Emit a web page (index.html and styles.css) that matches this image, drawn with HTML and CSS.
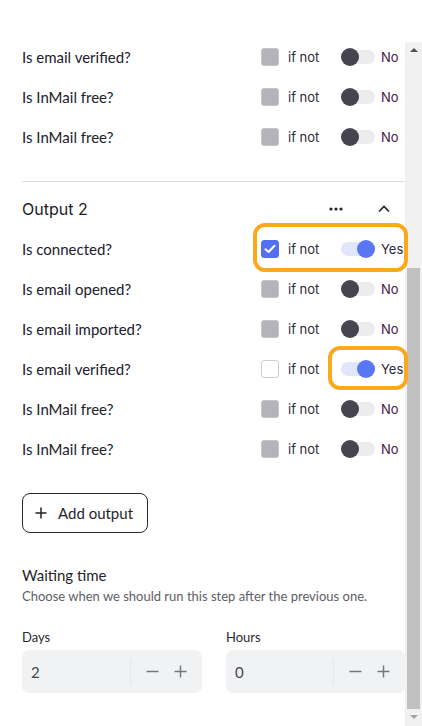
FILE: index.html
```html
<!DOCTYPE html>
<html>
<head>
<meta charset="utf-8">
<link rel="stylesheet" href="styles.css">
</head>
<body>
<div class="page">
  <main class="content">
    <section class="group">
      <div class="row">
        <span class="label">Is email verified?</span>
        <span class="cond"><span class="box"></span><span class="ifnot">if not</span></span>
        <span class="sw"><span class="track"><span class="knob"></span></span><span class="val no">No</span></span>
      </div>
      <div class="row">
        <span class="label">Is InMail free?</span>
        <span class="cond"><span class="box"></span><span class="ifnot">if not</span></span>
        <span class="sw"><span class="track"><span class="knob"></span></span><span class="val no">No</span></span>
      </div>
      <div class="row">
        <span class="label">Is InMail free?</span>
        <span class="cond"><span class="box"></span><span class="ifnot">if not</span></span>
        <span class="sw"><span class="track"><span class="knob"></span></span><span class="val no">No</span></span>
      </div>
    </section>

    <hr class="divider">

    <section class="group">
      <div class="out-head">
        <span class="out-title">Output 2</span>
        <span class="out-actions">
          <svg class="dots" width="14" height="4" viewBox="0 0 14 4"><circle cx="2" cy="2" r="1.6"/><circle cx="7" cy="2" r="1.6"/><circle cx="12" cy="2" r="1.6"/></svg>
          <svg class="chev" width="12" height="8" viewBox="0 0 12 8"><path d="M1 6.5 L6 1.5 L11 6.5" fill="none" stroke="#222" stroke-width="1.6"/></svg>
        </span>
      </div>
      <div class="row">
        <span class="label">Is connected?</span>
        <span class="cond"><span class="box checked"><svg width="12" height="10" viewBox="0 0 12 10"><path d="M1.5 5.2 L4.6 8 L10.5 1.8" fill="none" stroke="#fff" stroke-width="2" stroke-linecap="round" stroke-linejoin="round"/></svg></span><span class="ifnot alt">if not</span></span>
        <span class="sw"><span class="track on"><span class="knob"></span></span><span class="val yes">Yes</span></span>
        <span class="mark mark-a"></span>
      </div>
      <div class="row">
        <span class="label">Is email opened?</span>
        <span class="cond"><span class="box"></span><span class="ifnot">if not</span></span>
        <span class="sw"><span class="track"><span class="knob"></span></span><span class="val no">No</span></span>
      </div>
      <div class="row">
        <span class="label">Is email imported?</span>
        <span class="cond"><span class="box"></span><span class="ifnot">if not</span></span>
        <span class="sw"><span class="track"><span class="knob"></span></span><span class="val no">No</span></span>
      </div>
      <div class="row">
        <span class="label">Is email verified?</span>
        <span class="cond"><span class="box empty"></span><span class="ifnot">if not</span></span>
        <span class="sw"><span class="track on"><span class="knob"></span></span><span class="val yes">Yes</span></span>
        <span class="mark mark-b"></span>
      </div>
      <div class="row">
        <span class="label">Is InMail free?</span>
        <span class="cond"><span class="box"></span><span class="ifnot">if not</span></span>
        <span class="sw"><span class="track"><span class="knob"></span></span><span class="val no">No</span></span>
      </div>
      <div class="row">
        <span class="label">Is InMail free?</span>
        <span class="cond"><span class="box"></span><span class="ifnot">if not</span></span>
        <span class="sw"><span class="track"><span class="knob"></span></span><span class="val no">No</span></span>
      </div>
    </section>

    <button class="add-btn" type="button">
      <svg width="12" height="12" viewBox="0 0 12 12"><path d="M6 0.5 V11.5 M0.5 6 H11.5" stroke="#222" stroke-width="1.5"/></svg>
      <span>Add output</span>
    </button>

    <section class="wait">
      <h3 class="wait-title">Waiting time</h3>
      <p class="wait-desc">Choose when we should run this step after the previous one.</p>
      <div class="fields">
        <div class="field">
          <span class="field-label">Days</span>
          <div class="stepper">
            <span class="step-val">2</span>
            <span class="step-btns">
              <svg width="13" height="13" viewBox="0 0 13 13"><path d="M0.5 6.5 H12.5" stroke="#777" stroke-width="1.5"/></svg>
              <svg width="13" height="13" viewBox="0 0 13 13"><path d="M6.5 0.5 V12.5 M0.5 6.5 H12.5" stroke="#777" stroke-width="1.5"/></svg>
            </span>
          </div>
        </div>
        <div class="field">
          <span class="field-label">Hours</span>
          <div class="stepper">
            <span class="step-val">0</span>
            <span class="step-btns">
              <svg width="13" height="13" viewBox="0 0 13 13"><path d="M0.5 6.5 H12.5" stroke="#777" stroke-width="1.5"/></svg>
              <svg width="13" height="13" viewBox="0 0 13 13"><path d="M6.5 0.5 V12.5 M0.5 6.5 H12.5" stroke="#777" stroke-width="1.5"/></svg>
            </span>
          </div>
        </div>
      </div>
    </section>
  </main>

  <aside class="scrollbar">
    <span class="arrow up"></span>
    <span class="sb-track"><span class="thumb"></span></span>
    <span class="arrow down"></span>
  </aside>
</div>
</body>
</html>
```

FILE: styles.css
```css
* { box-sizing: border-box; }
html, body { margin: 0; padding: 0; background: #fff; }
body {
  width: 422px;
  height: 726px;
  overflow: hidden;
  font-family: Lato, "Noto Sans", sans-serif;
  color: #1f1f2b;
}
.page {
  display: flex;
  height: 726px;
}
.content {
  flex: 1;
  padding: 37px 0 0 22px;
  min-width: 0;
}
.group { display: flex; flex-direction: column; }
.row {
  position: relative;
  display: grid;
  grid-template-columns: 1fr 80px 64px;
  align-items: center;
  height: 40px;
}
.label { font-size: 15px; color: #20202c; }
.cond { display: flex; align-items: center; }
.box {
  width: 18px; height: 18px;
  border-radius: 3px;
  background: #b3b3b9;
  border: 1px solid #c4c4c9;
  display: flex; align-items: center; justify-content: center;
}
.box.checked { background: #5370f2; border-color: #5370f2; }
.box.empty { background: #fff; border-color: #cfcfd4; }
.ifnot {
  margin-left: 9px;
  font-family: Inter, "Noto Sans", sans-serif;
  font-size: 13px;
  color: #2a2a3e;
}
.sw { display: flex; align-items: center; }
.track {
  position: relative;
  width: 34px; height: 14px;
  border-radius: 7px;
  background: #ececee;
  display: flex; align-items: center;
}
.knob {
  width: 18px; height: 18px;
  border-radius: 50%;
  background: #45454f;
}
.track.on { background: #e1e6fd; justify-content: flex-end; }
.track.on .knob { background: #5876f6; }
.val {
  margin-left: 6px;
  font-family: Inter, "Noto Sans", sans-serif;
  font-size: 13px;
}
.val.no { color: #4a1446; }
.val.yes { color: #2a2a36; margin-left: 6px; }

.mark {
  position: absolute;
  border: 4px solid #fba81c;
  border-radius: 12px;
  pointer-events: none;
}
.mark-a { left: 231px; right: -3px; top: -6px; bottom: -3px; }
.mark-b { left: 306px; right: -3px; top: -3px; bottom: -1px; }

.divider {
  border: 0;
  border-top: 1px solid #dedede;
  margin: 24px 0 7px 0;
}
.out-head {
  display: flex;
  align-items: center;
  justify-content: space-between;
  height: 40px;
}
.out-title {
  font-family: Inter, "Noto Sans", sans-serif;
  font-size: 16px;
  color: #1a1a26;
}
.out-actions { display: flex; align-items: center; gap: 35px; padding-right: 15px; }
.dots { fill: #222; }

.add-btn {
  margin-top: 24px;
  height: 40px;
  width: 126px;
  display: flex;
  align-items: center;
  gap: 11px;
  padding: 0 0 0 12px;
  background: #fff;
  border: 1px solid #2a2a2a;
  border-radius: 8px;
  font-family: Lato, "Noto Sans", sans-serif;
  font-size: 15px;
  color: #1f1f2b;
}

.wait { margin-top: 32px; }
.wait-title {
  margin: 0;
  font-weight: normal;
  font-size: 15px;
  line-height: 20px;
  color: #1f1f2b;
}
.wait-desc {
  margin: 3px 0 0 0;
  font-size: 13px;
  line-height: 16px;
  color: #5e5e66;
}
.fields {
  display: grid;
  grid-template-columns: 180px 179px;
  gap: 24px;
  margin-top: 25px;
}
.field { display: flex; flex-direction: column; }
.field-label { font-size: 13px; line-height: 16px; color: #2a2a36; }
.stepper {
  margin-top: 5px;
  height: 43px;
  background: #f1f2f4;
  border-radius: 7px;
  display: flex;
  align-items: center;
}
.step-val {
  flex: 1;
  padding-left: 9px;
  font-size: 15px;
  color: #444450;
  border-right: 1px solid #e6e7ea;
  height: 26px;
  line-height: 26px;
}
.step-btns {
  display: flex;
  align-items: center;
  gap: 15px;
  padding: 0 15px 0 15px;
}

.scrollbar {
  width: 17px;
  margin-top: 42px;
  height: 684px;
  background: #f1f1f1;
  display: flex;
  flex-direction: column;
  align-items: center;
}
.arrow {
  width: 0; height: 0;
  border-left: 4px solid transparent;
  border-right: 4px solid transparent;
}
.arrow.up { border-bottom: 4px solid #505050; margin-top: 6px; }
.arrow.down { border-top: 4px solid #a3a3a3; margin-bottom: 7px; }
.sb-track {
  flex: 1;
  width: 100%;
  display: flex;
  flex-direction: column;
  justify-content: flex-end;
  align-items: center;
  padding-bottom: 6px;
}
.thumb {
  width: 13px;
  height: 441px;
  background: #c1c1c1;
}
```
